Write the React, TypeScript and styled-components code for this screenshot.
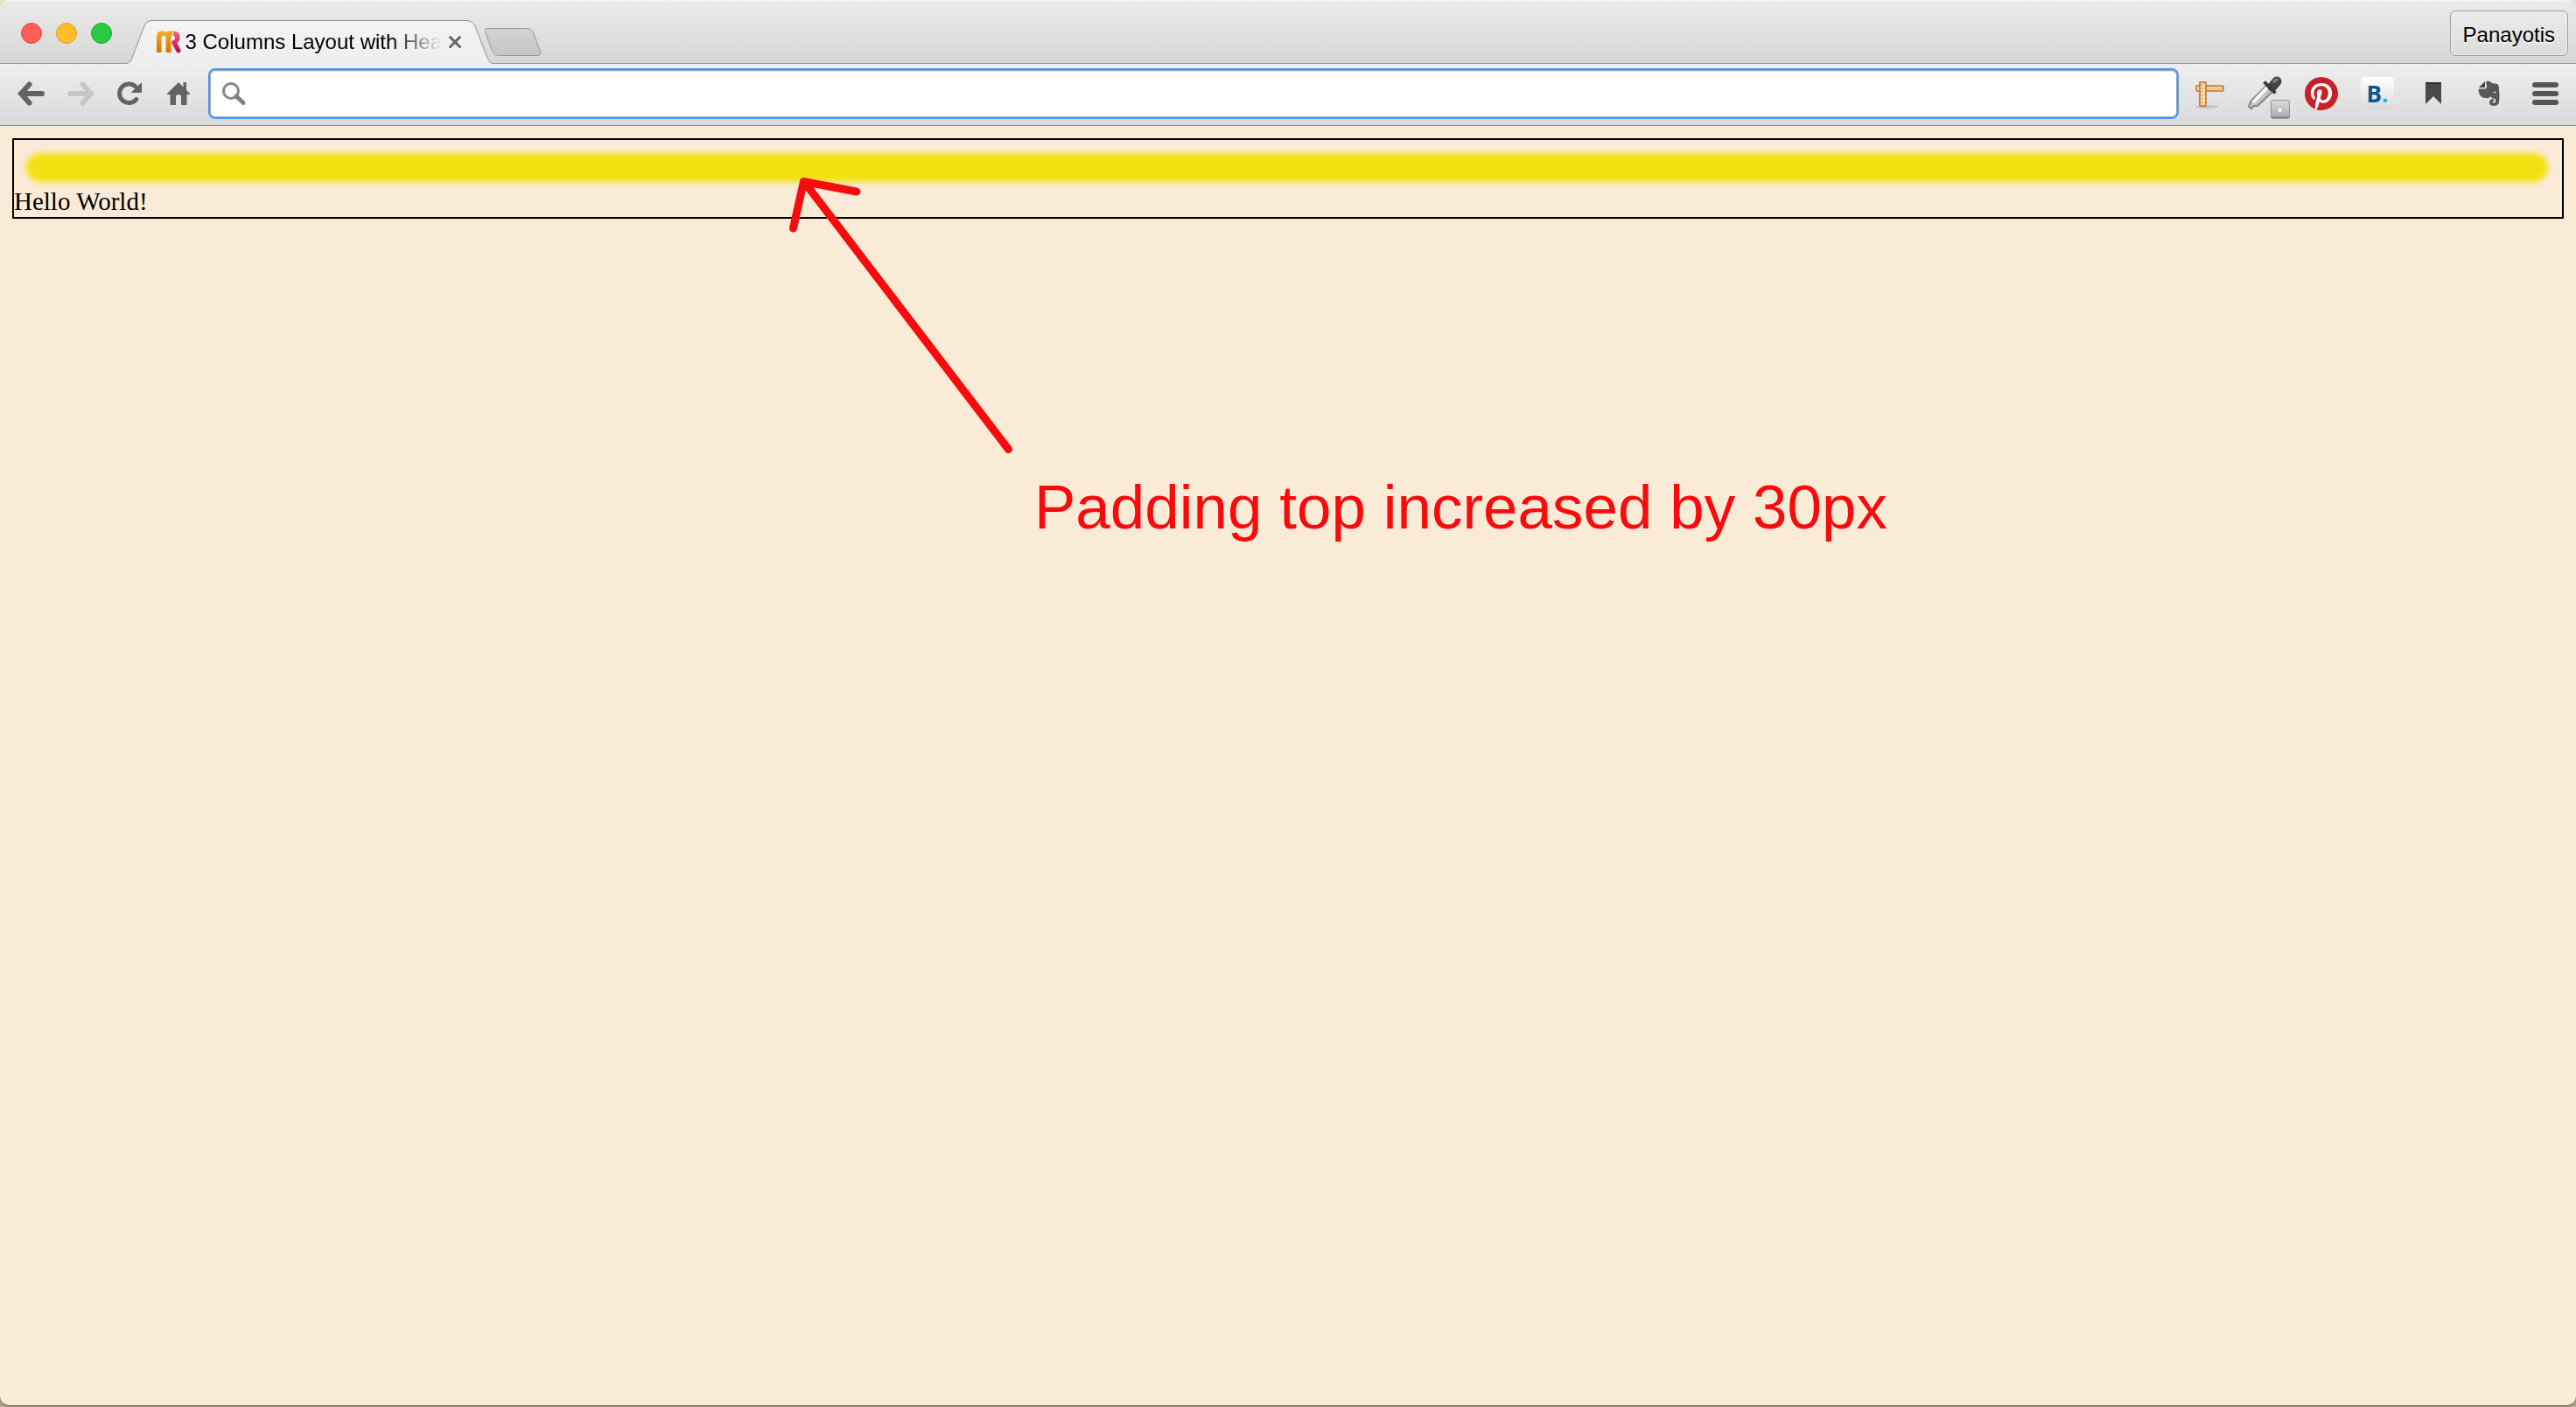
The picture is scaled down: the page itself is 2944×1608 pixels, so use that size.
import React from "react";
import styled, { createGlobalStyle } from "styled-components";

const sans = '"Liberation Sans", Arial, Helvetica, sans-serif';
const serif = '"Liberation Serif", "Times New Roman", Times, serif';

const GlobalStyle = createGlobalStyle`
  *, *::before, *::after { box-sizing: border-box; }
  body { margin: 0; background: #efdfc9; font-family: ${sans}; }
`;

const Backdrop = styled.div`
  min-height: 100vh;
  padding-bottom: 2px;
  display: flex;
  background: linear-gradient(#efdfc9 50%, #aaa193 50%);
`;

const Window = styled.div`
  flex: 1;
  min-width: 0;
  display: flex;
  flex-direction: column;
  border-radius: 10px;
  overflow: hidden;
  background: #faebd7;
  box-shadow: 0 1px 1px #5d564c;
`;

const TabStrip = styled.header`
  display: flex;
  align-items: flex-start;
  height: 73px;
  padding: 0 9px 0 24px;
  border-bottom: 1px solid #949494;
  background: linear-gradient(#f8f8f8, #eaeaea 2px, #d7d7d7);
`;

const Lights = styled.div`
  display: flex;
  gap: 16px;
  padding-top: 26px;
`;

const Light = styled.button<{ $fill: string; $rim: string }>`
  width: 24px;
  height: 24px;
  padding: 0;
  border: 1px solid ${(p) => p.$rim};
  border-radius: 50%;
  background: ${(p) => p.$fill};
`;

const Tab = styled.div`
  position: relative;
  display: flex;
  align-items: center;
  width: 420px;
  height: 50px;
  margin: 23px 0 0 16px;
  padding: 0 29px 0 35px;
`;

const Shape = styled.svg`
  position: absolute;
  inset: 0;
`;

const TabLabel = styled.button`
  position: relative;
  flex: 1;
  min-width: 0;
  display: flex;
  align-items: center;
  gap: 5px;
  padding: 0;
  border: 0;
  background: none;
  font: 24px/28px ${sans};
  color: #000;
  text-align: left;
`;

const TabTitle = styled.span`
  flex: 1;
  white-space: nowrap;
  mask-image: linear-gradient(to right, #000 80%, transparent 100%);
`;

const IconButton = styled.button<{ $width: number }>`
  position: relative;
  flex: none;
  display: flex;
  align-items: center;
  justify-content: center;
  width: ${(p) => p.$width}px;
  height: 48px;
  padding: 0;
  border: 0;
  background: none;
  svg { flex: none; }
`;

const NewTab = styled.button`
  width: 66px;
  height: 34px;
  margin: 31px 0 0 -11px;
  padding: 0;
  border: 0;
  background: none;
  position: relative;
`;

const Profile = styled.button`
  height: 52px;
  margin: 12px 0 0 auto;
  padding: 3px 14px 0;
  border: 1px solid #9d9d9d;
  border-radius: 6px;
  background: linear-gradient(#ebebeb, #dcdcdc);
  box-shadow: inset 0 0 0 1px #eeeeee;
  font: 24px/28px ${sans};
  color: #000;
  text-shadow: 0 2px 0 #f4f4f4;
`;

const Toolbar = styled.nav`
  display: flex;
  align-items: center;
  height: 71px;
  padding: 0 3px 2px 8px;
  border-bottom: 1px solid #858585;
  background: linear-gradient(#eeeeee, #dadada);
`;

const Omnibox = styled.label`
  flex: 1;
  display: flex;
  align-items: center;
  height: 58px;
  margin: 0 3px 0 6px;
  padding-left: 13px;
  border: 2px solid #3f99f6;
  border-radius: 8px;
  background: #fff;
  box-shadow: inset 0 0 0 1px #a9a9a9, inset 0 2px 1px #dddddd;
`;

const Address = styled.input`
  flex: 1;
  min-width: 0;
  height: 48px;
  margin: 0 12px;
  padding: 0;
  border: 0;
  outline: 0;
  background: none;
  font: 28px/32px ${sans};
`;

const Page = styled.main`
  position: relative;
  flex: 1;
  padding: 14px;
`;

const Box = styled.div`
  padding: 15px 0 2px;
  border: 2px solid #000;
`;

const Highlight = styled.div`
  height: 33px;
  margin: 0 16px 6px 14px;
  border-radius: 16px;
  background: #f3e010;
  filter: blur(3px);
`;

const Greeting = styled.p`
  margin: 0;
  font: 29px/32px ${serif};
  color: #000;
`;

const Arrow = styled.svg`
  position: absolute;
  left: 896px;
  top: 56px;
`;

const Note = styled.p`
  position: absolute;
  left: 1182px;
  top: 396px;
  margin: 0;
  font: 71px/80px ${sans};
  color: #f60c0c;
  white-space: nowrap;
`;

const Favicon = () => (
  <svg width="30" height="28" viewBox="0 0 30 28" aria-hidden="true">
    <defs>
      <linearGradient id="fm" x1="0" y1="0" x2="0" y2="1">
        <stop offset="0" stopColor="#f3b02c" />
        <stop offset="1" stopColor="#dd7300" />
      </linearGradient>
      <linearGradient id="fr" x1="0" y1="0" x2="0" y2="1">
        <stop offset="0" stopColor="#f0697c" />
        <stop offset="1" stopColor="#c4004a" />
      </linearGradient>
    </defs>
    <path d="M0 27V8Q0 0 7 0Q10 0 11.500 2Q13.500 0 16.500 0H20V5Q18 6 18 9V27H11.500V9Q11.500 6 8.800 6Q6 6 6 9V27Z" fill="url(#fm)" />
    <path d="M21 0.500Q29 1 29 8Q29 13 25.500 15L30 24Q30 27.500 27 27.500Q25 27.500 24 25L19 15.500V12.500Q23 12 23 9Q23 7 21 6Z" fill="url(#fr)" />
  </svg>
);

const ArrowIcon = ({ color, flip }: { color: string; flip?: boolean }) => (
  <svg width="32" height="28" viewBox="0 0 32 28" aria-hidden="true">
    <g transform={flip ? "translate(32 0) scale(-1 1)" : undefined} fill="none" stroke={color} strokeWidth="6">
      <path d="M6 14H28" strokeLinecap="round" />
      <path d="M13.500 3.500L4 14L13.500 24.500" strokeLinecap="round" strokeLinejoin="miter" />
    </g>
  </svg>
);

const Reload = () => (
  <svg width="28" height="28" viewBox="0 0 28 28" aria-hidden="true">
    <path d="M21.800 20.500A10.800 10.800 0 1 1 20.500 5.600" fill="none" stroke="#636363" strokeWidth="5" strokeLinecap="round" />
    <path d="M28 1V13H15.500Z" fill="#636363" />
  </svg>
);

const Home = () => (
  <svg width="26" height="28" viewBox="0 0 26 28" aria-hidden="true">
    <path d="M13 1L18.500 6.500V1H22V10L26 14V15H22.500V27H16V18Q16 15 13 15Q10 15 10 18V27H3.500V15H0V14Z" fill="#636363" />
  </svg>
);

const Magnifier = () => (
  <svg width="28" height="28" viewBox="0 0 28 28" aria-hidden="true">
    <circle cx="11" cy="11" r="8.500" fill="none" stroke="#888" strokeWidth="3" />
    <path d="M17 17L25 24.500" stroke="#808080" strokeWidth="5" strokeLinecap="round" />
  </svg>
);

const Rulers = () => (
  <svg width="34" height="34" viewBox="0 0 34 34" aria-hidden="true">
    <ellipse cx="14" cy="32" rx="13" ry="2" fill="#c4c4c4" />
    <rect x="2" y="8" width="31" height="6" rx="1" fill="#f7d3a2" stroke="#d28d4c" strokeWidth="2" />
    <path d="M14 11H32" stroke="#efb878" strokeWidth="3" strokeDasharray="2 2" />
    <rect x="6" y="4" width="7" height="27" rx="1" fill="#f9dcb0" stroke="#c98242" strokeWidth="2" />
    <path d="M9 6V30" stroke="#efb878" strokeWidth="3" strokeDasharray="2 2" />
  </svg>
);

const Dropper = () => (
  <svg width="64" height="64" viewBox="0 0 64 64" aria-hidden="true">
    <defs>
      <linearGradient id="dg" x1="0" y1="0" x2="0" y2="1">
        <stop offset="0" stopColor="#dcdcdc" />
        <stop offset="1" stopColor="#a9a9a9" />
      </linearGradient>
    </defs>
    <path d="M34 22L41 29L23 46L19 46L16 49L13 47L15 41Z" fill="#c4c4c4" stroke="#858585" strokeWidth="2" />
    <path d="M34 25L18 42" stroke="#f8f8f8" strokeWidth="4" />
    <path d="M40 24L45 18" stroke="#454545" strokeWidth="11" strokeLinecap="round" />
    <path d="M32 20L42 30" stroke="#3a3a3a" strokeWidth="4" strokeLinecap="square" />
    <path d="M41 19L46 15" stroke="#858585" strokeWidth="3" />
    <rect x="38.500" y="39.500" width="21" height="21" rx="2" fill="url(#dg)" stroke="#929292" />
    <rect x="39" y="58" width="20" height="2" fill="#8c8c8c" />
    <circle cx="48.500" cy="51" r="2" fill="#fff" />
  </svg>
);

const Pinterest = () => (
  <svg width="38" height="38" viewBox="0 0 24 24" aria-hidden="true">
    <circle cx="12" cy="12" r="11.500" fill="#fff" />
    <path fill="#cb1f27" d="M12 0C5.373 0 0 5.372 0 12c0 5.084 3.163 9.426 7.627 11.174-.105-.949-.2-2.405.042-3.441.218-.937 1.407-5.965 1.407-5.965s-.359-.719-.359-1.782c0-1.668.967-2.914 2.171-2.914 1.023 0 1.518.769 1.518 1.690 0 1.029-.655 2.568-.994 3.995-.283 1.194.599 2.169 1.777 2.169 2.133 0 3.772-2.249 3.772-5.495 0-2.873-2.064-4.882-5.012-4.882-3.414 0-5.418 2.561-5.418 5.207 0 1.031.397 2.138.893 2.738a.36.36 0 0 1 .083.345l-.333 1.360c-.053.220-.174.267-.402.161-1.499-.698-2.436-2.889-2.436-4.649 0-3.785 2.750-7.262 7.929-7.262 4.163 0 7.398 2.967 7.398 6.931 0 4.136-2.607 7.464-6.227 7.464-1.216 0-2.359-.631-2.750-1.378l-.748 2.853c-.271 1.043-1.002 2.350-1.492 3.146 1.124.347 2.317.535 3.554.535 6.627 0 12-5.373 12-12S18.627 0 12 0z" />
  </svg>
);

const Buffer = styled.span`
  display: flex;
  align-items: center;
  justify-content: center;
  width: 38px;
  height: 38px;
  border-radius: 5px;
  background: linear-gradient(#fff, #d9d9d9);
  font: bold 26px/38px "Open Sans", sans-serif;
  color: #07558f;
  i { color: #1fb1e6; font-style: normal; }
`;

const Bookmark = () => (
  <svg width="20" height="26" viewBox="0 0 20 26" aria-hidden="true">
    <path d="M1 0H19V25L10 16L1 25Z" fill="#494949" />
    <path d="M1 1H19" stroke="#2f2f2f" strokeWidth="2" />
  </svg>
);

const Elephant = () => (
  <svg width="26" height="30" viewBox="0 0 26 30" aria-hidden="true">
    <path d="M8 1L1 8H7Q8 8 8 7Z" fill="#3f3f3f" />
    <path d="M9 1Q14 0 16 3L22 4Q24 5 24 9Q25 17 24 25Q23 29 18 29Q13 29 13 25Q13 21 18 21V24Q16 24 16 25Q17 26 20 25V21Q16 21 14 18Q13 21 9 20Q3 20 1 14Q0 11 1 9.500H8Q10 9 10 7Z" fill="#585858" />
    <path d="M17 14Q19 11 21 14Z" fill="#e5e5e5" />
  </svg>
);

const Menu = () => (
  <svg width="30" height="28" viewBox="0 0 30 28" aria-hidden="true">
    <path d="M3 4H27M3 14H27M3 24H27" stroke="#555" strokeWidth="6" strokeLinecap="round" />
  </svg>
);

const extensions: { name: string; icon: React.ReactNode }[] = [
  { name: "Page ruler", icon: <Rulers /> },
  { name: "Colour picker", icon: <Dropper /> },
  { name: "Pinterest", icon: <Pinterest /> },
  { name: "Bookmarking", icon: <Buffer>B<i>.</i></Buffer> },
  { name: "Reading list", icon: <Bookmark /> },
  { name: "Evernote", icon: <Elephant /> },
  { name: "Menu", icon: <Menu /> },
];

const tabOutline =
  "M0 49.500C4 49 5 47 7 43L20 9C22 4 24 0.500 30 0.500H388C395 0.500 397 3 399 7L413 43C415 47 416 49 420 49.500";

export default function App() {
  return (
    <Backdrop>
      <GlobalStyle />
      <Window>
        <TabStrip>
          <Lights>
            <Light aria-label="Close window" $fill="#ff5f57" $rim="#e2463f" />
            <Light aria-label="Minimise window" $fill="#ffbd2e" $rim="#e1a116" />
            <Light aria-label="Zoom window" $fill="#28ca42" $rim="#12ac28" />
          </Lights>
          <Tab>
            <Shape width="420" height="50" viewBox="0 0 420 50" aria-hidden="true">
              <defs>
                <linearGradient id="tab" x1="0" y1="0" x2="0" y2="1">
                  <stop offset="0" stopColor="#f3f3f3" />
                  <stop offset="1" stopColor="#eeeeee" />
                </linearGradient>
              </defs>
              <path d={`${tabOutline}V50H0Z`} fill="url(#tab)" />
              <path d={tabOutline} fill="none" stroke="#8f8f8f" />
            </Shape>
            <TabLabel>
              <Favicon />
              <TabTitle>3 Columns Layout with Hea</TabTitle>
            </TabLabel>
            <IconButton $width={30} aria-label="Close tab">
              <svg width="16" height="16" viewBox="0 0 16 16" aria-hidden="true">
                <path d="M2.500 2.500L13.500 13.500M13.500 2.500L2.500 13.500" stroke="#666" strokeWidth="3" strokeLinecap="round" />
              </svg>
            </IconButton>
          </Tab>
          <NewTab aria-label="New tab">
            <Shape width="66" height="34" viewBox="0 0 66 34" aria-hidden="true">
              <defs>
                <linearGradient id="new" x1="0" y1="0" x2="0" y2="1">
                  <stop offset="0" stopColor="#d3d3d3" />
                  <stop offset="1" stopColor="#c5c5c5" />
                </linearGradient>
              </defs>
              <path d="M4 1.500H48C53 1.500 55 3 57 7L64 27C65 30 65 32.500 61 32.500H18C13 32.500 11 30 9 26L2 6C1 3 1 1.500 4 1.500Z" fill="url(#new)" stroke="#969696" />
            </Shape>
          </NewTab>
          <Profile>Panayotis</Profile>
        </TabStrip>
        <Toolbar>
          <IconButton $width={56} aria-label="Back"><ArrowIcon color="#636363" /></IconButton>
          <IconButton $width={56} aria-label="Forward"><ArrowIcon color="#c6c6c6" flip /></IconButton>
          <IconButton $width={56} aria-label="Reload"><Reload /></IconButton>
          <IconButton $width={56} aria-label="Home"><Home /></IconButton>
          <Omnibox>
            <Magnifier />
            <Address type="text" aria-label="Search or enter address" />
          </Omnibox>
          {extensions.map((e) => (
            <IconButton key={e.name} $width={64} aria-label={e.name}>{e.icon}</IconButton>
          ))}
        </Toolbar>
        <Page>
          <Box>
            <Highlight />
            <Greeting>Hello World!</Greeting>
          </Box>
          <Arrow width="264" height="324" viewBox="0 0 264 324" aria-hidden="true">
            <path d="M10.500 61L22.500 7.500L83 19M24 9L256.500 313.500" fill="none" stroke="#f60c0c" strokeWidth="9" strokeLinecap="round" strokeLinejoin="round" />
          </Arrow>
          <Note>Padding top increased by 30px</Note>
        </Page>
      </Window>
    </Backdrop>
  );
}
